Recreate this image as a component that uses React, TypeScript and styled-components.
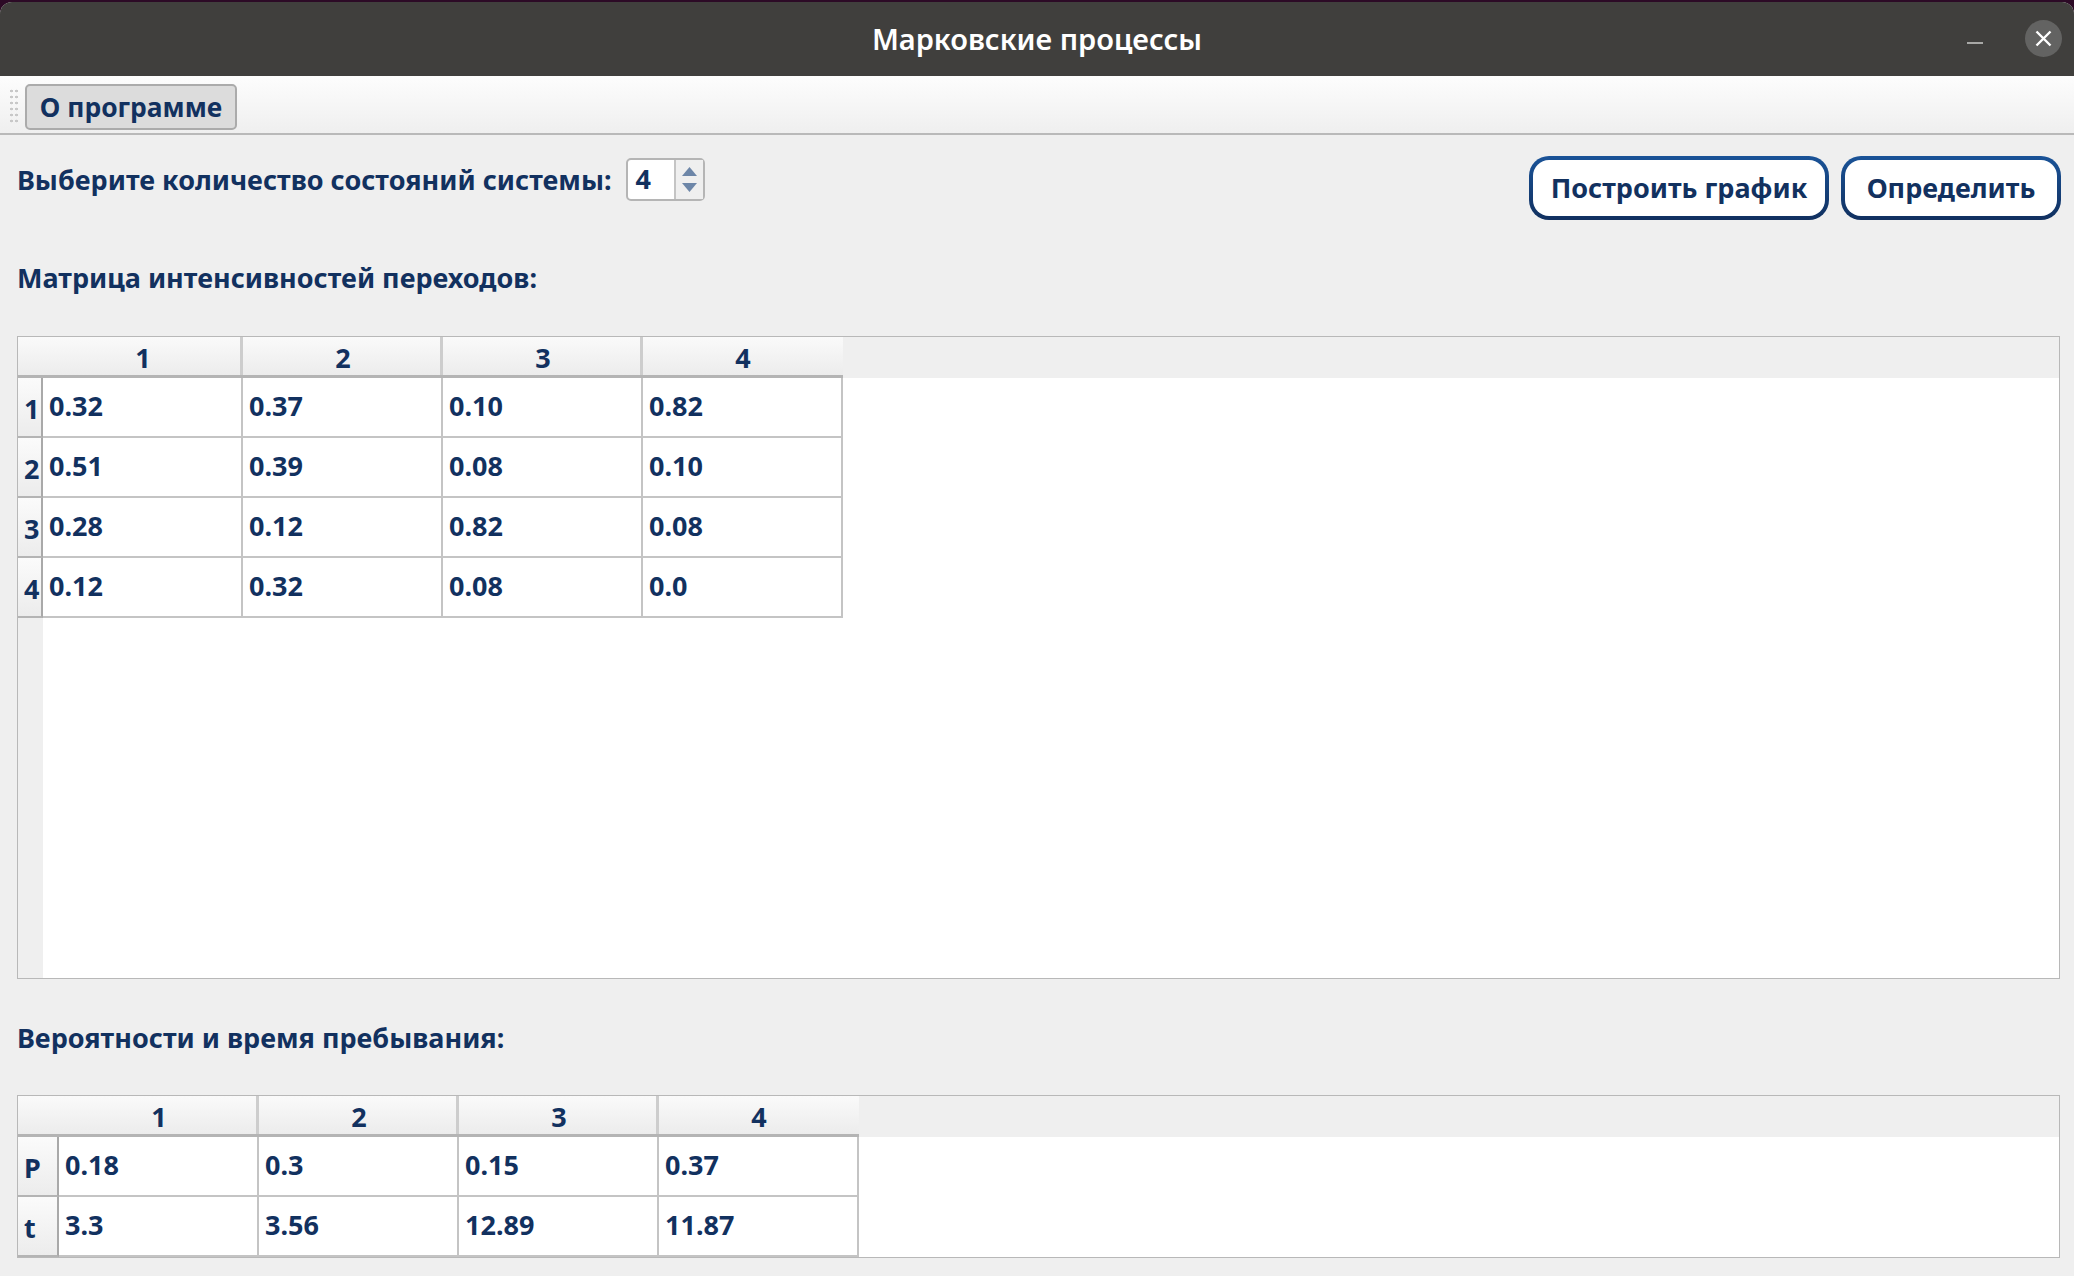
import React from "react";
import styled, { createGlobalStyle } from "styled-components";

const ink = "#12315f";

const GlobalStyle = createGlobalStyle`
  html, body {
    margin: 0;
    padding: 0;
    background: #2c0a26;
  }

  * {
    box-sizing: border-box;
  }
`;

const Window = styled.div`
  background-color: #efefef;
  border-radius: 12px 12px 0 0;
  color: ${ink};
  display: flex;
  flex-direction: column;
  font-family: "Noto Sans", "Open Sans", sans-serif;
  font-size: 27px;
  font-weight: 700;
  height: 1274px;
  margin-top: 2px;
  overflow: hidden;
  width: 2074px;
`;

const TitleBar = styled.header`
  align-items: center;
  background-color: #403f3d;
  color: #ffffff;
  display: flex;
  flex: none;
  height: 74px;
  justify-content: center;
  position: relative;
`;

const Title = styled.h1`
  font-size: 29px;
  font-weight: 600;
  margin: 0 0 2px;
`;

const MinimizeMark = styled.span`
  background-color: #a8a8a6;
  height: 2px;
  left: 1967px;
  position: absolute;
  top: 40px;
  width: 16px;
`;

const CloseButton = styled.span`
  align-items: center;
  background-color: #636362;
  border-radius: 50%;
  display: flex;
  height: 37px;
  justify-content: center;
  left: 2025px;
  position: absolute;
  top: 18px;
  width: 37px;
`;

const Toolbar = styled.div`
  align-items: flex-start;
  background: linear-gradient(#fdfdfd, #efefef);
  border-bottom: 2px solid #b9b9b9;
  display: flex;
  flex: none;
  gap: 6px;
  height: 59px;
  padding: 8px 0 0 9px;
`;

const Grip = styled.span`
  background-image: radial-gradient(circle, #c8c8c8 1.2px, transparent 1.6px);
  background-size: 5px 6px;
  height: 36px;
  margin-top: 4px;
  width: 10px;
`;

const ToolButton = styled.button`
  background-color: #dcdcdc;
  border: 2px solid #ababab;
  border-radius: 5px;
  color: inherit;
  font: inherit;
  font-size: 26.4px;
  height: 46px;
  padding: 0;
  width: 212px;
`;

const Content = styled.main`
  display: flex;
  flex: 1;
  flex-direction: column;
  padding: 21px 13px 0 17px;
`;

const TopRow = styled.div`
  align-items: flex-start;
  display: flex;
  height: 64px;
  justify-content: space-between;
`;

const StateCount = styled.div`
  align-items: center;
  display: flex;
  gap: 14px;
  margin-top: 2px;
`;

const Label = styled.div`
  line-height: 36px;
  white-space: nowrap;
`;

const SpinBox = styled.div`
  background-color: #ffffff;
  border: 2px solid #b5b5b5;
  border-radius: 5px;
  display: flex;
  height: 43px;
  width: 79px;
`;

const SpinValue = styled.span`
  border-right: 2px solid #c4c4c4;
  flex: 1;
  line-height: 37px;
  padding-left: 8px;
`;

const SpinArrows = styled.span`
  align-items: center;
  background-color: #efefef;
  display: flex;
  flex-direction: column;
  gap: 7px;
  justify-content: center;
  width: 27px;
`;

const Actions = styled.div`
  display: flex;
  gap: 12px;
`;

const ActionButton = styled.button<{ $width: number }>`
  background: linear-gradient(#ffffff, #ffffff) padding-box,
    linear-gradient(#1a5398, #11305f) border-box;
  border: 4px solid transparent;
  border-radius: 20px;
  color: inherit;
  font: inherit;
  height: 64px;
  padding: 0 0 2px;
  width: ${(p) => p.$width}px;
`;

const SectionLabel = styled(Label)<{ $top: number; $bottom: number }>`
  margin-bottom: ${(p) => p.$bottom}px;
  margin-top: ${(p) => p.$top}px;
`;

const Frame = styled.div<{ $height: number }>`
  border: 1px solid #b8b8b8;
  display: flex;
  flex-direction: column;
  height: ${(p) => p.$height}px;
  margin-right: 1px;
`;

const HeaderRow = styled.div`
  display: flex;
  flex: none;
  height: 41px;
`;

const HeaderCell = styled.div<{ $inset: number }>`
  background: linear-gradient(#fafafa, #ececec);
  border-bottom: 3px solid #b4b4b4;
  box-shadow: inset -3px 0 #cdcdcd;
  line-height: 41px;
  padding-left: ${(p) => p.$inset}px;
  text-align: center;
  width: ${(p) => p.$inset + 200}px;

  &:last-child {
    box-shadow: none;
  }
`;

const TableBody = styled.div`
  display: flex;
  flex: 1;
  min-height: 0;
`;

const RowHeaders = styled.div<{ $width: number }>`
  display: flex;
  flex: none;
  flex-direction: column;
  width: ${(p) => p.$width}px;
`;

const RowHeader = styled.div`
  background: linear-gradient(#fbfbfb, #ececec);
  border-bottom: 2px solid #b4b4b4;
  border-right: 2px solid #a9a9a9;
  height: 60px;
  line-height: 61px;
  padding-left: 6px;
`;

const Cells = styled.div`
  background-color: #ffffff;
  flex: 1;
`;

const CellRow = styled.div`
  display: flex;
  height: 60px;
`;

const Cell = styled.div`
  border-bottom: 2px solid #c4c4c4;
  border-right: 2px solid #c4c4c4;
  line-height: 56px;
  padding-left: 6px;
  width: 200px;
`;

function Arrow({ up }: { up: boolean }) {
  return (
    <svg width="15" height="9" viewBox="0 0 15 9">
      <path d={up ? "M7.5 0L15 9H0Z" : "M0 0H15L7.5 9Z"} fill="#6d86a8" />
    </svg>
  );
}

type TableProps = {
  height: number;
  headerWidth: number;
  rowNames: string[];
  rows: string[][];
};

function DataTable({ height, headerWidth, rowNames, rows }: TableProps) {
  return (
    <Frame $height={height}>
      <HeaderRow>
        {["1", "2", "3", "4"].map((name, i) => (
          <HeaderCell key={name} $inset={i === 0 ? headerWidth : 0}>
            {name}
          </HeaderCell>
        ))}
      </HeaderRow>
      <TableBody>
        <RowHeaders $width={headerWidth}>
          {rowNames.map((name) => (
            <RowHeader key={name}>{name}</RowHeader>
          ))}
        </RowHeaders>
        <Cells>
          {rows.map((row, r) => (
            <CellRow key={r}>
              {row.map((value, c) => (
                <Cell key={c}>{value}</Cell>
              ))}
            </CellRow>
          ))}
        </Cells>
      </TableBody>
    </Frame>
  );
}

const intensities = [
  ["0.32", "0.37", "0.10", "0.82"],
  ["0.51", "0.39", "0.08", "0.10"],
  ["0.28", "0.12", "0.82", "0.08"],
  ["0.12", "0.32", "0.08", "0.0"],
];

const probabilities = [
  ["0.18", "0.3", "0.15", "0.37"],
  ["3.3", "3.56", "12.89", "11.87"],
];

function App() {
  return (
    <>
      <GlobalStyle />
      <Window>
        <TitleBar>
          <Title>Марковские процессы</Title>
          <MinimizeMark />
          <CloseButton>
            <svg width="17" height="17" viewBox="0 0 17 17">
              <path d="M1.5 1.5L15.5 15.5M15.5 1.5L1.5 15.5" stroke="#ffffff" strokeWidth="2.4" />
            </svg>
          </CloseButton>
        </TitleBar>
        <Toolbar>
          <Grip />
          <ToolButton>О программе</ToolButton>
        </Toolbar>
        <Content>
          <TopRow>
            <StateCount>
              <Label>Выберите количество состояний системы:</Label>
              <SpinBox>
                <SpinValue>4</SpinValue>
                <SpinArrows>
                  <Arrow up />
                  <Arrow up={false} />
                </SpinArrows>
              </SpinBox>
            </StateCount>
            <Actions>
              <ActionButton $width={300}>Построить график</ActionButton>
              <ActionButton $width={220}>Определить</ActionButton>
            </Actions>
          </TopRow>
          <SectionLabel $top={40} $bottom={40}>
            Матрица интенсивностей переходов:
          </SectionLabel>
          <DataTable
            height={643}
            headerWidth={25}
            rowNames={["1", "2", "3", "4"]}
            rows={intensities}
          />
          <SectionLabel $top={41} $bottom={39}>
            Вероятности и время пребывания:
          </SectionLabel>
          <DataTable
            height={163}
            headerWidth={41}
            rowNames={["P", "t"]}
            rows={probabilities}
          />
        </Content>
      </Window>
    </>
  );
}

export default App;
